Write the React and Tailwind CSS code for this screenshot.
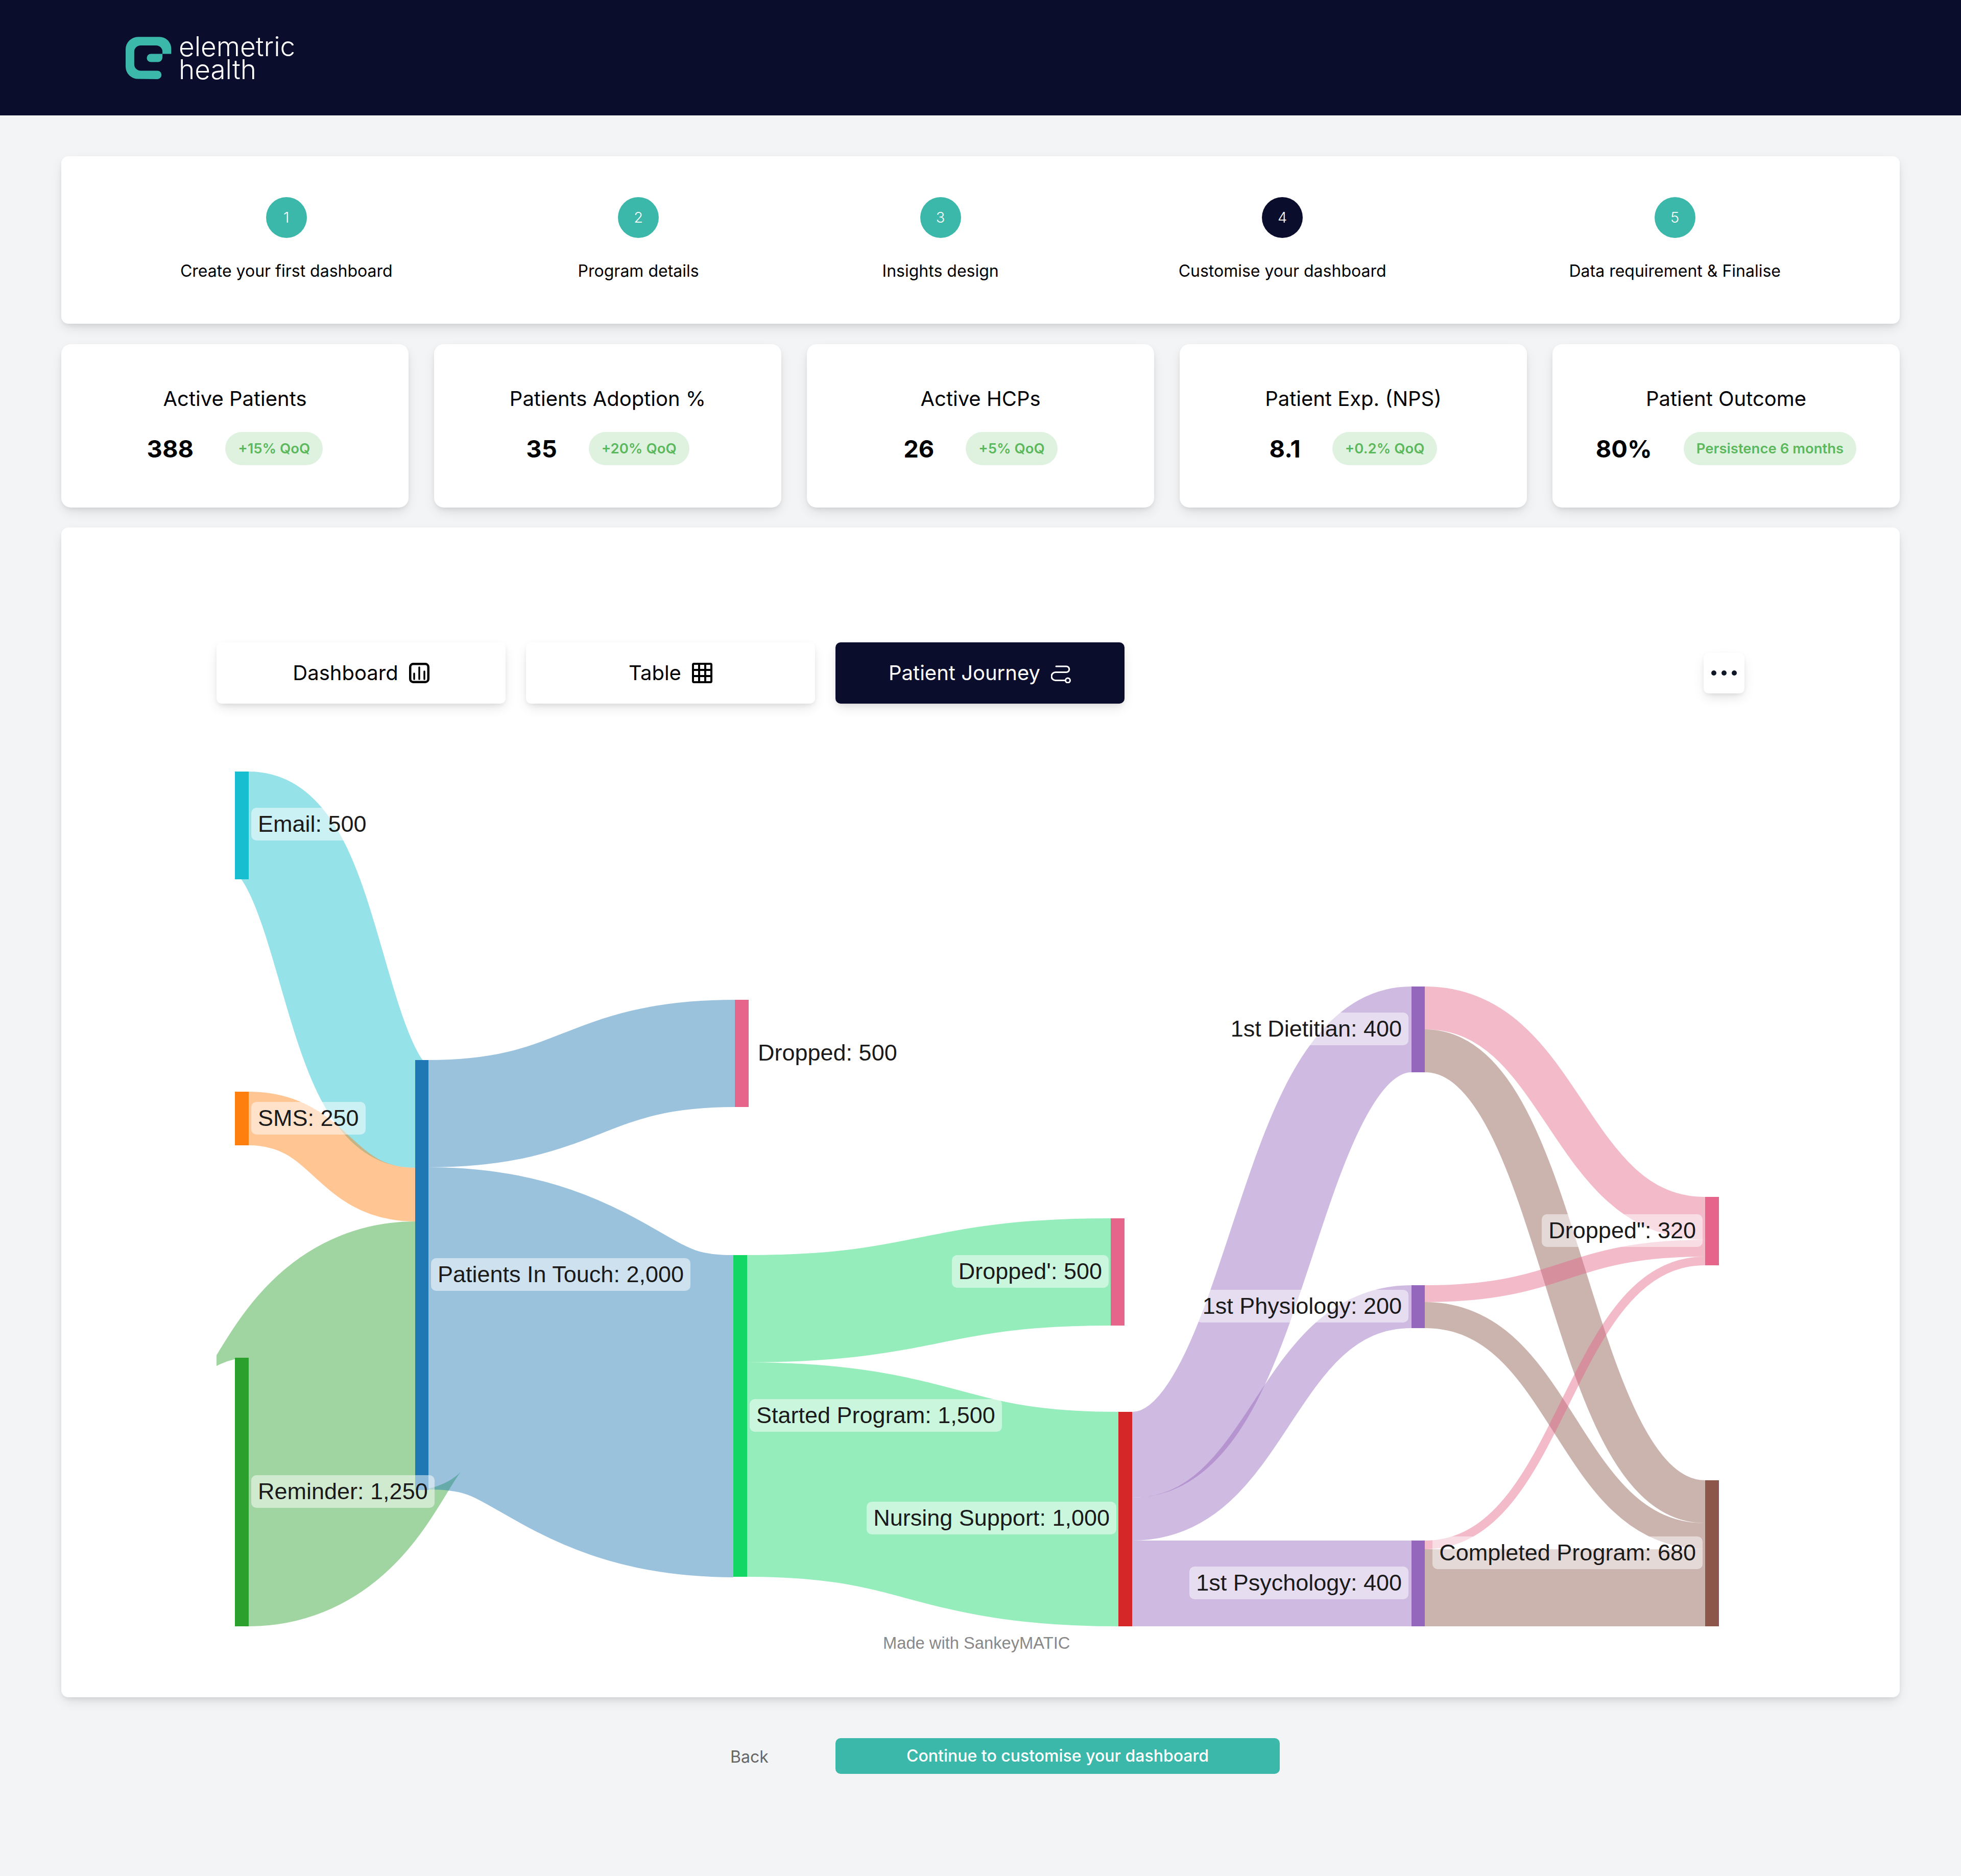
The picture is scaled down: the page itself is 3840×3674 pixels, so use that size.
import React from 'react';

const steps = [
  { n: 1, label: 'Create your first dashboard' },
  { n: 2, label: 'Program details', nudge: 'translate-x-[5px]' },
  { n: 3, label: 'Insights design', nudge: 'translate-x-[6px]' },
  { n: 4, label: 'Customise your dashboard', active: true },
  { n: 5, label: 'Data requirement & Finalise' },
];

const stats = [
  { title: 'Active Patients', value: '388', badge: '+15% QoQ' },
  { title: 'Patients Adoption %', value: '35', badge: '+20% QoQ' },
  { title: 'Active HCPs', value: '26', badge: '+5% QoQ' },
  { title: 'Patient Exp. (NPS)', value: '8.1', badge: '+0.2% QoQ' },
  { title: 'Patient Outcome', value: '80%', badge: 'Persistence 6 months' },
];

// x0, x1, then top edge and thickness at both ends; flows are stroked like the original chart
const flows = [
  { x0: 487, x1: 813, y0: 1511, y1: 2076, h: 211, color: '#17becf' },
  { x0: 487, x1: 813, y0: 2138, y1: 2287, h: 105, color: '#ff7f0e' },
  { x0: 487, x1: 813, y0: 2659, y1: 2392, h: 526, color: '#2ca02c' },
  { x0: 839, x1: 1439, y0: 2076, y1: 1958, h: 210, color: '#1f77b4' },
  { x0: 839, x1: 1436, y0: 2286, y1: 2458, h: 631, color: '#1f77b4' },
  { x0: 1463, x1: 2175, y0: 2458, y1: 2386, h: 210, color: '#12d765' },
  { x0: 1463, x1: 2190, y0: 2668, y1: 2765, h: 420, color: '#12d765' },
  { x0: 2217, x1: 2764, y0: 2765, y1: 1932, h: 168, color: '#9467bd' },
  { x0: 2217, x1: 2764, y0: 2933, y1: 2517, h: 84, color: '#9467bd' },
  { x0: 2217, x1: 2764, y0: 3017, y1: 3017, h: 168, color: '#9467bd' },
  { x0: 2790, x1: 3339, y0: 1932, y1: 2344, h: 84, color: '#e5668a' },
  { x0: 2790, x1: 3339, y0: 2016, y1: 2899, h: 84, color: '#8c564b' },
  { x0: 2790, x1: 3339, y0: 2517, y1: 2428, h: 33, color: '#e5668a' },
  { x0: 2790, x1: 3339, y0: 2550, y1: 2983, h: 51, color: '#8c564b' },
  { x0: 2790, x1: 3339, y0: 3017, y1: 2461, h: 17, color: '#e5668a' },
  { x0: 2790, x1: 3339, y0: 3034, y1: 3034, h: 151, color: '#8c564b' },
];

const nodes = [
  { x: 460, y: 1511, w: 27, h: 211, color: '#17becf' },
  { x: 460, y: 2138, w: 27, h: 105, color: '#ff7f0e' },
  { x: 460, y: 2659, w: 27, h: 526, color: '#2ca02c' },
  { x: 813, y: 2076, w: 26, h: 842, color: '#1f77b4' },
  { x: 1439, y: 1958, w: 27, h: 210, color: '#e5668a' },
  { x: 1436, y: 2458, w: 27, h: 630, color: '#12d765' },
  { x: 2175, y: 2386, w: 27, h: 210, color: '#e5668a' },
  { x: 2190, y: 2765, w: 27, h: 420, color: '#d62728' },
  { x: 2764, y: 1932, w: 26, h: 168, color: '#9467bd' },
  { x: 2764, y: 2517, w: 26, h: 84, color: '#9467bd' },
  { x: 2764, y: 3017, w: 26, h: 168, color: '#9467bd' },
  { x: 3339, y: 2344, w: 27, h: 134, color: '#e5668a' },
  { x: 3339, y: 2899, w: 27, h: 286, color: '#8c564b' },
];

const labels = [
  { text: 'Email: 500', pos: 'left-[372px] top-[102px]' },
  { text: 'SMS: 250', pos: 'left-[372px] top-[678px]' },
  { text: 'Reminder: 1,250', pos: 'left-[372px] top-[1409px]' },
  { text: 'Patients In Touch: 2,000', pos: 'left-[724px] top-[984px]' },
  { text: 'Dropped: 500', pos: 'left-[1351px] top-[550px]' },
  { text: 'Started Program: 1,500', pos: 'left-[1348px] top-[1260px]' },
  { text: "Dropped': 500", pos: 'right-[1549px] top-[978px]' },
  { text: 'Nursing Support: 1,000', pos: 'right-[1534px] top-[1461px]' },
  { text: '1st Dietitian: 400', pos: 'right-[962px] top-[503px]' },
  { text: '1st Physiology: 200', pos: 'right-[962px] top-[1046px]' },
  { text: '1st Psychology: 400', pos: 'right-[962px] top-[1588px]' },
  { text: 'Dropped": 320', pos: 'right-[386px] top-[898px]' },
  { text: 'Completed Program: 680', pos: 'right-[386px] top-[1529px]' },
];

const cardShadow = 'shadow-[0_10px_24px_-4px_rgba(0,0,0,0.12),0_4px_10px_-2px_rgba(0,0,0,0.08)]';

const Logo = () => (
  <svg width="90" height="84" viewBox="78 67 267 247" className="shrink-0">
    <path
      fill="#3cb8ab"
      d="M262 312a24.500 24.500 0 0 0 0-49H165a37 37 0 0 1-37-37V153a37 37 0 0 1 37-37h90a37 37 0 0 1 37 37v12H225a24 24 0 0 0 0 48h40a27 27 0 0 0 27-27v-21h51v-30a68 68 0 0 0-68-68H150a72 72 0 0 0-72 72v100a72 72 0 0 0 72 72z"
    />
  </svg>
);

const DashboardIcon = () => (
  <svg width="40" height="40" viewBox="0 0 40 40" fill="none" stroke="#000" strokeWidth="4.500">
    <rect x="2.250" y="2.250" width="35.500" height="35.500" rx="6" />
    <path d="M10 21v11M20 9v23M30 17v15" strokeWidth="3.500" strokeLinecap="round" />
  </svg>
);

const TableIcon = () => (
  <svg width="40" height="40" viewBox="0 0 40 40" fill="none" stroke="#000" strokeWidth="4">
    <rect x="2" y="2" width="36" height="36" rx="2" />
    <path d="M14 2v36M26 2v36M2 14h36M2 26h36" />
  </svg>
);

const JourneyIcon = () => (
  <svg width="40" height="40" viewBox="0 0 40 40" fill="none" stroke="#fff" strokeWidth="3">
    <path d="M10 7H30a5.750 5.750 0 0 1 0 11.500H9a8 8 0 0 0 0 16H28.500" strokeLinecap="round" />
    <circle cx="33" cy="34.500" r="4.500" />
  </svg>
);

const Sankey = () => (
  <div className="relative h-[1790px] w-full font-['Liberation_Sans',Arial,sans-serif]">
    <svg className="absolute inset-0" width="3600" height="1790" viewBox="120 1480 3600 1790">
      <defs>
        <clipPath id="chart-area">
          <rect x="424" y="1480" width="2960" height="1790" />
        </clipPath>
      </defs>
      <g clipPath="url(#chart-area)" fill="none" strokeOpacity="0.45">
        {flows.map(f => {
          const mid = (f.x0 + f.x1) / 2;
          const a = f.y0 + f.h / 2;
          const b = f.y1 + f.h / 2;
          return (
            <path
              key={`${f.x0}-${f.y0}-${f.y1}`}
              d={`M${f.x0} ${a}C${mid} ${a} ${mid} ${b} ${f.x1} ${b}`}
              stroke={f.color}
              strokeWidth={f.h}
            />
          );
        })}
      </g>
      {nodes.map(n => (
        <rect key={`${n.x}-${n.y}`} x={n.x} y={n.y} width={n.w} height={n.h} fill={n.color} />
      ))}
    </svg>
    {labels.map(l => (
      <div
        key={l.text}
        className={`absolute ${l.pos} h-[64px] rounded-[10px] bg-white/50 px-[13px] text-[45px] leading-[64px] text-[#1a1a1a] whitespace-nowrap`}
      >
        {l.text}
      </div>
    ))}
    <div className="absolute left-[1609px] top-[1716px] text-[32.700px] leading-[44px] text-[#888] whitespace-nowrap">
      Made with SankeyMATIC
    </div>
  </div>
);

export default function App() {
  return (
    <div className="min-h-[3674px] bg-[#f3f4f6] font-['Inter',sans-serif] text-black">
      <header className="flex h-[226px] items-start bg-[#0b0d2d] pl-[246px] pt-[72px]">
        <Logo />
        <div className="ml-[14px] -mt-[3px] text-[53px] font-light leading-[45px] text-white">
          <div>elemetric</div>
          <div>health</div>
        </div>
      </header>

      <main className="flex flex-col px-[120px] pt-[80px]">
        <section className={`flex h-[328px] justify-around rounded-[14px] bg-white px-[54px] pt-[80px] ${cardShadow}`}>
          {steps.map(step => (
            <div key={step.n} className={`flex flex-col items-center ${step.nudge || ''}`}>
              <div
                className={`flex h-[80px] w-[80px] items-center justify-center rounded-full text-[29px] font-light text-white ${
                  step.active ? 'bg-[#0b0d2d]' : 'bg-[#3cb8ab]'
                }`}
              >
                {step.n}
              </div>
              <div className="mt-[41px] text-[32px] leading-[48px] whitespace-nowrap">{step.label}</div>
            </div>
          ))}
        </section>

        <section className="mt-[40px] grid grid-cols-5 gap-[50px]">
          {stats.map(stat => (
            <div key={stat.title} className={`flex h-[320px] flex-col items-center rounded-[19px] bg-white pt-[83px] ${cardShadow}`}>
              <div className="text-[40px] leading-[48px]">{stat.title}</div>
              <div className="mt-[41px] flex items-center gap-[62px]">
                <div className="text-[47px] font-bold leading-[64px]">{stat.value}</div>
                <div className="flex h-[65px] items-center rounded-full bg-[#dff2e0] px-[25px] text-[27.500px] font-semibold text-[#5cb85c] whitespace-nowrap">
                  {stat.badge}
                </div>
              </div>
            </div>
          ))}
        </section>

        <section className={`mt-[39px] h-[2291px] rounded-[14px] bg-white pt-[225px] ${cardShadow}`}>
          <div className="flex items-center justify-between px-[304px]">
            <div className="flex gap-[40px]">
              <button className={`flex h-[120px] w-[566px] items-center justify-center gap-[21px] rounded-[10px] bg-white text-[40px] ${cardShadow}`}>
                Dashboard <DashboardIcon />
              </button>
              <button className={`flex h-[120px] w-[566px] items-center justify-center gap-[21px] rounded-[10px] bg-white text-[40px] ${cardShadow}`}>
                Table <TableIcon />
              </button>
              <button className={`flex h-[120px] w-[566px] items-center justify-center gap-[21px] rounded-[10px] bg-[#0b0d2d] text-[40px] text-white ${cardShadow}`}>
                Patient Journey <JourneyIcon />
              </button>
            </div>
            <button className={`flex h-[80px] w-[80px] items-center justify-center gap-[10px] rounded-[10px] bg-white ${cardShadow}`}>
              <span className="h-[10px] w-[10px] rounded-full bg-gray-900" />
              <span className="h-[10px] w-[10px] rounded-full bg-gray-900" />
              <span className="h-[10px] w-[10px] rounded-full bg-gray-900" />
            </button>
          </div>
          <div className="mt-[102px]">
            <Sankey />
          </div>
        </section>

        <div className="mt-[80px] flex items-center pl-[1310px]">
          <button className="w-[206px] pt-[3px] text-left text-[32px] text-[#666]">Back</button>
          <button className="h-[70px] w-[870px] rounded-[10px] bg-[#3cb8ab] text-[32px] font-medium text-white">
            Continue to customise your dashboard
          </button>
        </div>
      </main>
    </div>
  );
}
